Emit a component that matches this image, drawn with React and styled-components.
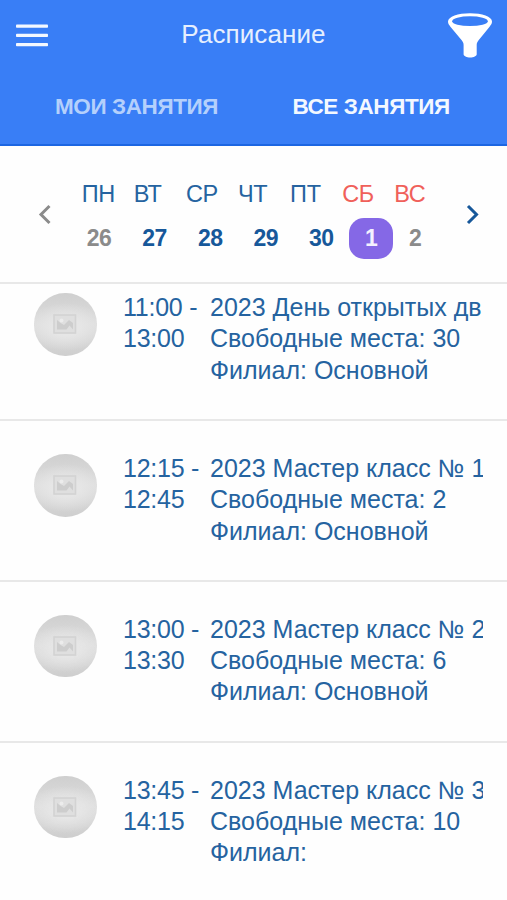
import styled, { createGlobalStyle } from 'styled-components'

const colors = {
  header: '#397ef6',
  navy: '#17589a',
  text: '#2563a0',
  red: '#f0605a',
  grey: '#8b8b8b',
  purple: '#8568e6',
  line: '#e8e8e8',
}

const GlobalStyle = createGlobalStyle`
  * {
    box-sizing: border-box;
  }
  body {
    margin: 0;
    background: #fefefe;
    font-family: 'Liberation Sans', Arial, sans-serif;
  }
  ul {
    list-style: none;
    margin: 0;
    padding: 0;
  }
  button {
    border: 0;
    padding: 0;
    background: none;
    font: inherit;
    color: inherit;
  }
`

const Screen = styled.div`
  display: flex;
  flex-direction: column;
  width: 507px;
  height: 900px;
  overflow: hidden;
`

const Header = styled.header`
  flex: none;
  height: 146px;
  background: ${colors.header};
  border-bottom: 2px solid #1c66e2;
  color: #fff;
`

const Toolbar = styled.div`
  display: grid;
  grid-template-columns: 60px 1fr 60px;
  align-items: center;
  height: 70px;
`

const IconButton = styled.button`
  display: flex;
  justify-content: ${(props) => props.$align};
  padding: ${(props) => props.$padding};
`

const Title = styled.h1`
  margin: 0;
  padding-bottom: 2px;
  font-size: 26px;
  font-weight: 400;
  line-height: 30px;
  letter-spacing: 0.1px;
  text-align: center;
  color: #e6effe;
`

const Tabs = styled.nav`
  display: grid;
  grid-template-columns: 237.5px 1fr;
  justify-items: start;
  padding: 23px 0 0 55px;
`

const Tab = styled.button`
  font-size: 22.500px;
  font-weight: 700;
  line-height: 28px;
  letter-spacing: -0.4px;
  white-space: nowrap;
  color: ${(props) => (props.$active ? '#f3f8ff' : '#b4d0fc')};
`

const Week = styled.section`
  flex: none;
  display: flex;
  align-items: center;
  justify-content: space-between;
  height: 138px;
  padding: 0 28px 0 38px;
  border-bottom: 2px solid ${colors.line};
`

const Days = styled.div`
  flex: 1;
  padding: 11px 0 0 20.200px;
`

const DayNames = styled.div`
  display: grid;
  grid-template-columns: repeat(7, 52.1px);
  padding-left: 10.500px;
  font-size: 23.500px;
  line-height: 28px;
  letter-spacing: -0.3px;
`

const DayName = styled.span`
  color: ${(props) => (props.$weekend ? colors.red : colors.text)};
`

const DayNumbers = styled.div`
  display: grid;
  grid-template-columns: repeat(5, 55.6px) 44px 44px;
  margin-top: 10px;
`

const DayNumber = styled.button`
  height: 41px;
  border-radius: 15px;
  font-size: 23px;
  font-weight: 700;
  line-height: 41px;
  letter-spacing: -0.5px;
  text-align: center;
  color: ${(props) => (props.$muted ? colors.grey : colors.navy)};
  ${(props) =>
    props.$selected &&
    `
    background: ${colors.purple};
    color: #f4f1ff;
  `}
`

const Arrow = styled.button`
  display: flex;
  color: ${(props) => props.$color};
`

// The list is scrolled a little, so its first row starts under the calendar
const List = styled.ul`
  flex: 1;
  overflow: hidden;
  > li:first-child {
    height: 137px;
    padding-top: 8px;
  }
`

const Lesson = styled.li`
  display: grid;
  grid-template-columns: 89px 87px 273px;
  align-items: start;
  height: 160.8px;
  padding: 32px 0 0 34px;
  border-bottom: 2px solid ${colors.line};
  font-size: 25px;
  line-height: 31.3px;
  color: ${colors.text};
`

const Avatar = styled.div`
  display: flex;
  align-items: center;
  justify-content: center;
  width: 62.500px;
  height: 62.500px;
  margin-top: 1px;
  border-radius: 50%;
  background: radial-gradient(ellipse 62% 38% at 50% 54%, #e6e6e6 35%, transparent),
    linear-gradient(#cfcfcf, #dedede 50%, #cecece);
`

const Time = styled.div`
  white-space: pre-line;
  letter-spacing: -0.25px;
`

const Info = styled.div`
  overflow: hidden;
  white-space: nowrap;
`

const days = [
  { name: 'ПН', number: 26, muted: true },
  { name: 'ВТ', number: 27 },
  { name: 'СР', number: 28 },
  { name: 'ЧТ', number: 29 },
  { name: 'ПТ', number: 30 },
  { name: 'СБ', number: 1, weekend: true, selected: true },
  { name: 'ВС', number: 2, weekend: true, muted: true },
]

const lessons = [
  { start: '11:00', end: '13:00', title: '2023 День открытых дв', places: 30, branch: 'Основной' },
  { start: '12:15', end: '12:45', title: '2023 Мастер класс № 1', places: 2, branch: 'Основной' },
  { start: '13:00', end: '13:30', title: '2023 Мастер класс № 2', places: 6, branch: 'Основной' },
  { start: '13:45', end: '14:15', title: '2023 Мастер класс № 3', places: 10, branch: '' },
]

const MenuIcon = () => (
  <svg width="32" height="24" viewBox="0 0 32 24" fill="#f4f8ff">
    <rect y="0.5" width="32" height="3.2" rx="0.8" />
    <rect y="9.8" width="32" height="3.2" rx="0.8" />
    <rect y="19.1" width="32" height="3.2" rx="0.8" />
  </svg>
)

const FilterIcon = () => (
  <svg width="44" height="45" viewBox="0 0 44 45">
    <path
      d="M0 8.5C0 3.5 10 .2 22 .2S44 3.5 44 8.5c0 2-1 3.3-2.4 5.2L30.4 27.5c-1.2 1.6-1.7 2.8-1.7 4.5v9.2c0 1.8-3 3.3-6.5 3.3s-6.6-1.5-6.6-3.3V32c0-1.7-.5-2.9-1.7-4.5L2.4 13.7C1 11.8 0 10.5 0 8.5Z"
      fill="#fff"
    />
    <ellipse cx="22" cy="8.2" rx="17.8" ry="4.9" fill={colors.header} />
  </svg>
)

const Chevron = ({ right }) => (
  <svg width="13" height="21" viewBox="0 0 13 21" fill="none" stroke="currentColor" strokeWidth="3">
    <path d={right ? 'M2 2l8.5 8.5L2 19' : 'M11.5 2L3 10.5l8.5 8.5'} />
  </svg>
)

const PictureIcon = () => (
  <svg width="24" height="20" viewBox="0 0 24 20">
    <rect x="1" y="1" width="21.5" height="18" fill="#dfdfdf" stroke="#d3d3d3" strokeWidth="1.6" />
    <path d="M4 15.500V6l3.500 3 3.500 2L16 6l4 3v6.500l-3.500-4-3 4H4Z" fill="#cdcdcd" />
    <circle cx="8.500" cy="6.500" r="2" fill="#ececec" />
  </svg>
)

export default function App() {
  return (
    <>
      <GlobalStyle />
      <Screen>
        <Header>
          <Toolbar>
            <IconButton $align="flex-start" $padding="1px 0 0 16px" aria-label="Меню">
              <MenuIcon />
            </IconButton>
            <Title>Расписание</Title>
            <IconButton $align="flex-end" $padding="0 15px 0 0" aria-label="Фильтр">
              <FilterIcon />
            </IconButton>
          </Toolbar>
          <Tabs>
            <Tab>МОИ ЗАНЯТИЯ</Tab>
            <Tab $active>ВСЕ ЗАНЯТИЯ</Tab>
          </Tabs>
        </Header>
        <Week>
          <Arrow $color={colors.grey} aria-label="Назад">
            <Chevron />
          </Arrow>
          <Days>
            <DayNames>
              {days.map((d) => (
                <DayName key={d.name} $weekend={d.weekend}>
                  {d.name}
                </DayName>
              ))}
            </DayNames>
            <DayNumbers>
              {days.map((d) => (
                <DayNumber key={d.name} $muted={d.muted} $selected={d.selected}>
                  {d.number}
                </DayNumber>
              ))}
            </DayNumbers>
          </Days>
          <Arrow $color={colors.navy} aria-label="Вперёд">
            <Chevron right />
          </Arrow>
        </Week>
        <List>
          {lessons.map((l) => (
            <Lesson key={l.start}>
              <Avatar>
                <PictureIcon />
              </Avatar>
              <Time>{`${l.start} -\n${l.end}`}</Time>
              <Info>
                <div>{l.title}</div>
                <div>Свободные места: {l.places}</div>
                <div>Филиал: {l.branch}</div>
              </Info>
            </Lesson>
          ))}
        </List>
      </Screen>
    </>
  )
}
